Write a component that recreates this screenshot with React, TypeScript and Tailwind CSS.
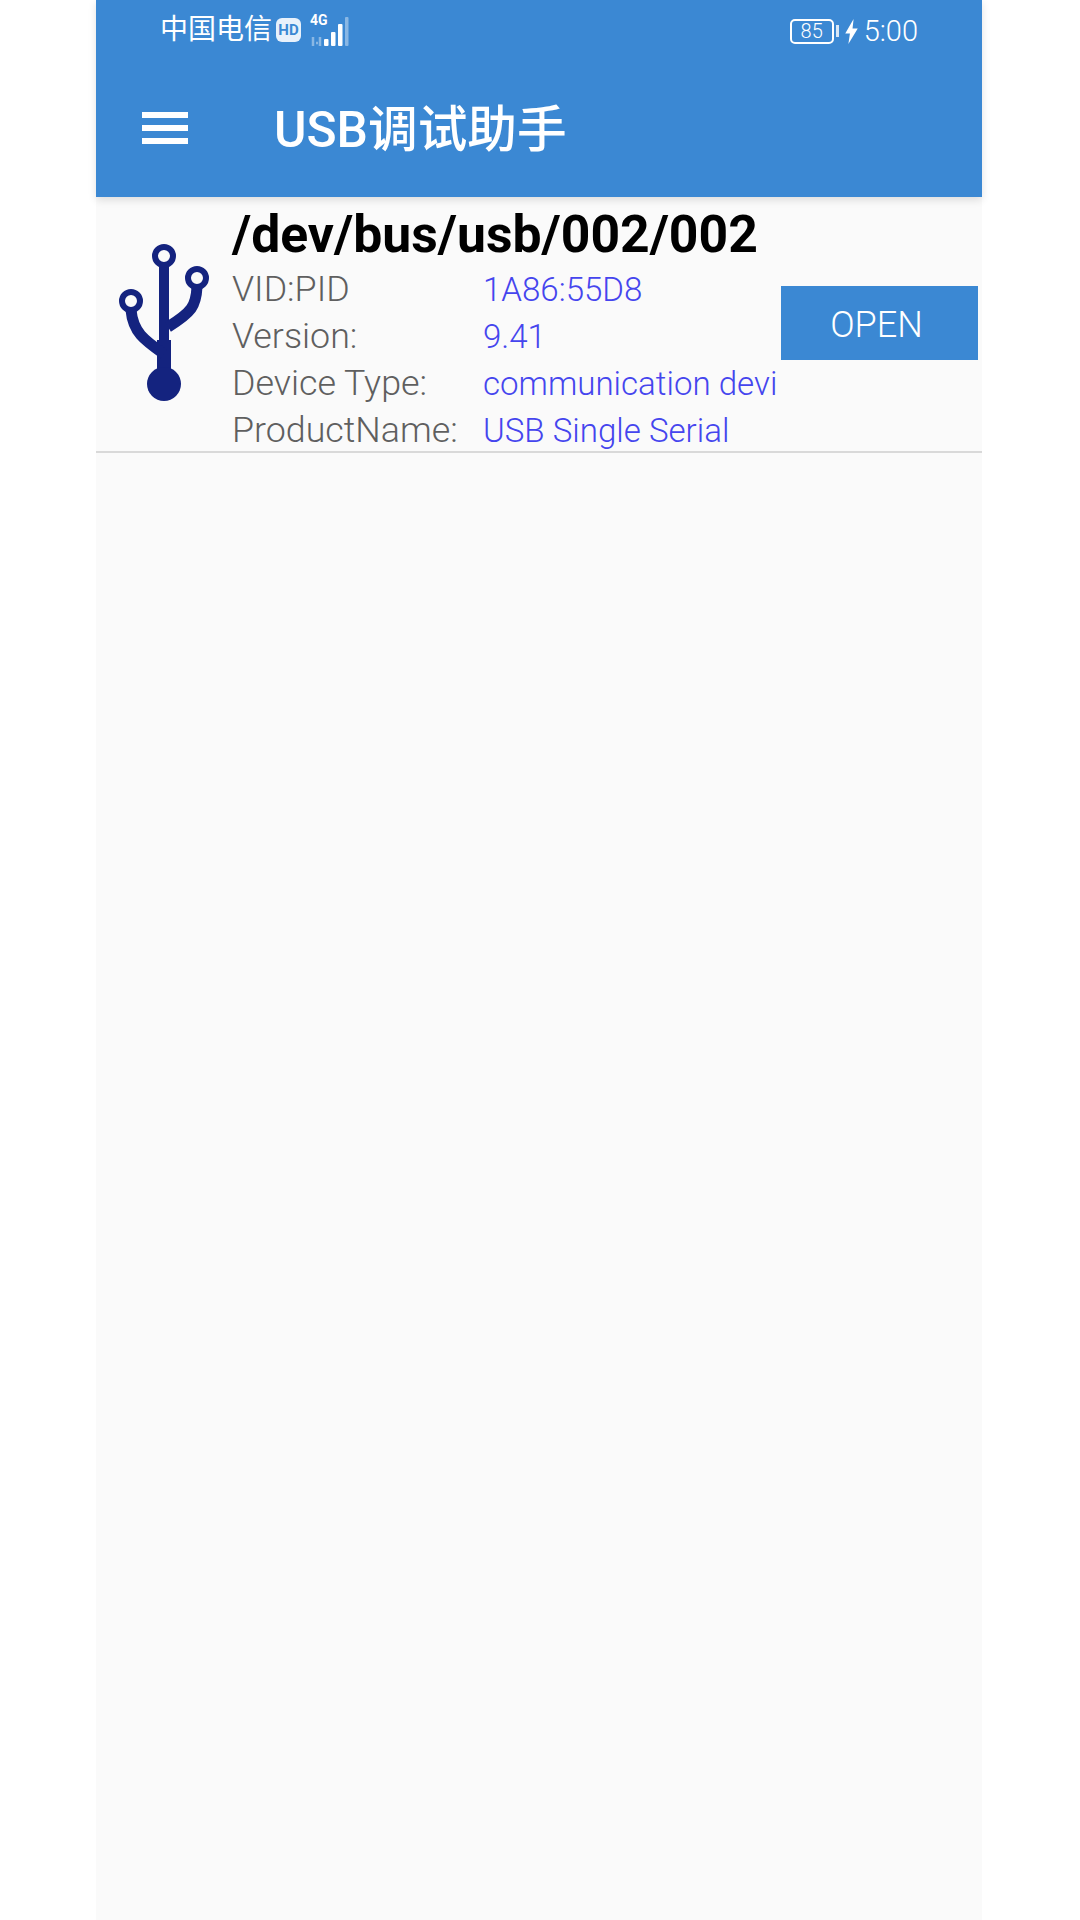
const font = { fontFamily: '"Roboto", "Noto Sans CJK SC", sans-serif' };

const rows = [
  ["VID:PID", "1A86:55D8"],
  ["Version:", "9.41"],
  ["Device Type:", "communication devi"],
  ["ProductName:", "USB Single Serial"],
];

function UsbIcon() {
  return (
    <svg width="96" height="166" viewBox="115 240 96 166" fill="none" stroke="#14237f">
      <path d="M164 264V340" strokeWidth="10" />
      <path d="M164 340V372" strokeWidth="14" />
      <path d="M131 310C133 332 144 340 164 354" strokeWidth="11" />
      <path d="M197 287C196 306 192 312 168 327" strokeWidth="11" />
      <circle cx="164" cy="256" r="9" strokeWidth="6" />
      <circle cx="197" cy="278" r="9" strokeWidth="6" />
      <circle cx="131" cy="301" r="9" strokeWidth="6" />
      <circle cx="164" cy="384" r="17" fill="#14237f" stroke="none" />
    </svg>
  );
}

function SignalIcon() {
  return (
    <svg width="42" height="34" viewBox="0 0 42 34" fill="#ffffff">
      <rect x="15" y="26" width="4.5" height="7" rx="1" />
      <rect x="22" y="19" width="4.5" height="14" rx="1" />
      <rect x="29" y="11" width="4.5" height="22" rx="1" />
      <rect x="36" y="4" width="3.5" height="29" rx="1" opacity="0.4" />
      <path d="M4 24v9M11 24v9M7 30h2" stroke="#ffffff" strokeWidth="2.5" opacity="0.4" />
    </svg>
  );
}

export default function App() {
  return (
    <div className="min-h-[1920px] bg-white pl-[96px]" style={font}>
      <div className="w-[886px] min-h-[1920px] bg-[#fafafa]">
        <header className="h-[197px] bg-[#3b88d3] text-white shadow-[0_3px_8px_rgba(0,0,0,0.12)]">
          <div className="h-[60px] flex items-center pl-[64px] pr-[64px]">
            <span className="text-[28px] leading-none">中国电信</span>
            <span className="ml-[4px] w-[25px] h-[24px] rounded-[6px] bg-[#e8f1fb] text-[#3b88d3] text-[15px] font-bold flex items-center justify-center">
              HD
            </span>
            <span className="relative ml-[8px] w-[42px] h-[34px]">
              <SignalIcon />
              <span className="absolute left-[1px] top-0 text-[14px] font-bold leading-none">4G</span>
            </span>
            <div className="ml-auto flex items-center pt-[2px]">
              <span className="w-[44px] h-[25px] rounded-[5px] border-2 border-white text-[20px] font-light leading-none flex items-center justify-center">
                85
              </span>
              <span className="ml-[2px] w-[3px] h-[12px] bg-white/80" />
              <svg className="ml-[6px]" width="13" height="25" viewBox="0 0 12 24" fill="#ffffff">
                <path d="M8 0L0 14h4.5L3 24l9-15H7z" />
              </svg>
              <span className="ml-[6px] text-[29px] font-light leading-none">5:00</span>
            </div>
          </div>
          <div className="h-[137px] flex items-center pl-[46px] pb-[1px]">
            <div className="w-[46px] flex flex-col gap-[7px]">
              <div className="h-[6px] bg-white" />
              <div className="h-[6px] bg-white" />
              <div className="h-[6px] bg-white" />
            </div>
            <h1 className="ml-[86px] mt-[6px] text-[49.7px] font-medium leading-none">USB调试助手</h1>
          </div>
        </header>

        <div className="flex h-[256px] border-b-2 border-[#d9d9d9]">
          <div className="w-[136px] pl-[19px] pt-[43px] shrink-0">
            <UsbIcon />
          </div>
          <div className="w-[549px] shrink-0 pt-[7px]">
            <div className="text-[51.7px] font-bold leading-[62px] text-black">/dev/bus/usb/002/002</div>
            {rows.map(([label, value]) => (
              <div key={label} className="flex h-[47px] items-center">
                <span className="w-[251px] shrink-0 text-[35.8px] font-light text-[#5f5f5f]">{label}</span>
                <span className="whitespace-nowrap pt-[1px] text-[33.1px] font-light text-[#4545ee]">{value}</span>
              </div>
            ))}
          </div>
          <div className="pt-[89px]">
            <button className="w-[197px] h-[74px] pt-[3px] pr-[6px] bg-[#3b88d3] text-white text-[36px] font-light">OPEN</button>
          </div>
        </div>
      </div>
    </div>
  );
}
